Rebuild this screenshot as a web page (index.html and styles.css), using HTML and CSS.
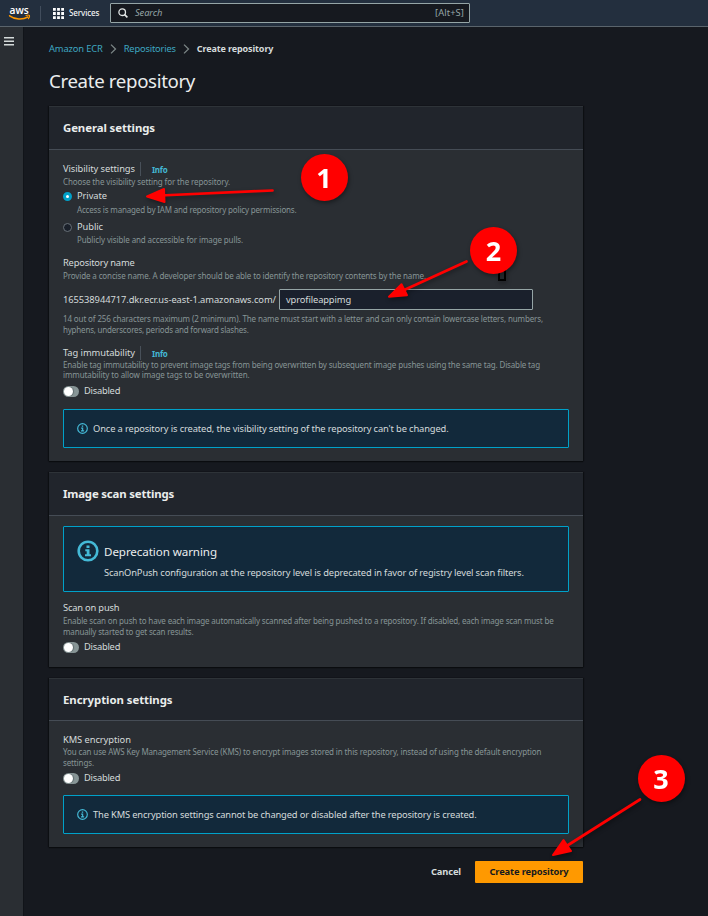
FILE: index.html
```html
<!DOCTYPE html>
<html lang="en">
<head>
<meta charset="utf-8">
<title>Create repository</title>
<link rel="stylesheet" href="styles.css">
</head>
<body>
<header class="topbar">
  <svg class="logo" width="22" height="20" viewBox="0 0 22 20">
    <text x="0.5" y="10.600" class="logo-text" textLength="19.300" lengthAdjust="spacingAndGlyphs">aws</text>
    <path d="M.6 12.800c5.600 4 13 4.200 18.300 1.200" fill="none" stroke="#f90" stroke-width="1.500" stroke-linecap="round"/>
    <path d="M17 12.500c1.500-.5 3-.5 3.500 0 .4.700-.2 2.100-1.100 3.200" fill="none" stroke="#f90" stroke-width="1.100" stroke-linecap="round"/>
  </svg>
  <span class="divider"></span>
  <svg class="grid-icon" width="11" height="11" viewBox="0 0 11 11" fill="#fff">
    <path d="M0 0h2.800v2.800H0zM4.100 0h2.800v2.800H4.100zM8.200 0H11v2.800H8.200zM0 4.100h2.800v2.800H0zM4.100 4.100h2.800v2.800H4.100zM8.200 4.100H11v2.800H8.200zM0 8.200h2.800V11H0zM4.100 8.200h2.800V11H4.100zM8.200 8.200H11V11H8.200z"/>
  </svg>
  <span class="services">Services</span>
  <div class="search">
    <svg width="10" height="10" viewBox="0 0 10 10" fill="none" stroke="#e4e8e8" stroke-width="1.300"><circle cx="4.200" cy="4.200" r="3.300"/><path d="M6.600 6.600l2.800 2.800" stroke-width="1.600"/></svg>
    <span class="placeholder">Search</span>
    <span class="shortcut">[Alt+S]</span>
  </div>
</header>
<div class="shell">
  <nav class="rail">
    <svg width="10" height="9" viewBox="0 0 10 9" fill="#d5dbdb"><path d="M0 0h10v1.500H0zM0 3.500h10V5H0zM0 7h10v1.500H0z"/></svg>
  </nav>
  <main class="content">
    <div class="crumbs">
      <a>Amazon ECR</a>
      <svg width="7" height="10" viewBox="0 0 7 10" fill="none" stroke="#7b8585" stroke-width="1.300"><path d="M1 .6L5.500 5 1 9.400"/></svg>
      <a class="crumb-repos">Repositories</a>
      <svg width="7" height="10" viewBox="0 0 7 10" fill="none" stroke="#7b8585" stroke-width="1.300"><path d="M1 .6L5.500 5 1 9.400"/></svg>
      <b>Create repository</b>
    </div>
    <h1>Create repository</h1>

    <section class="card general">
      <h2>General settings</h2>
      <div class="body">
        <div class="label"><span>Visibility settings</span><span class="info">Info</span></div>
        <p class="hint visibility-hint">Choose the visibility setting for the repository.</p>
        <div class="option"><i class="radio checked"></i>Private</div>
        <p class="hint option-hint">Access is managed by IAM and repository policy permissions.</p>
        <div class="option second"><i class="radio"></i>Public</div>
        <p class="hint option-hint public-hint">Publicly visible and accessible for image pulls.</p>
        <div class="label name-label"><span class="tight">Repository name</span></div>
        <p class="hint name-hint">Provide a concise name. A developer should be able to identify the repository contents by the name.</p>
        <div class="name-row"><span class="prefix">165538944717.dkr.ecr.us-east-1.amazonaws.com/</span><div class="field">vprofileappimg</div></div>
        <p class="hint rules">14 out of 256 characters maximum (2 minimum). The name must start with a letter and can only contain lowercase letters, numbers,<br><span class="rules-end">hyphens, underscores, periods and forward slashes.</span></p>
        <div class="label tag-label"><span>Tag immutability</span><span class="info">Info</span></div>
        <p class="hint tag-hint">Enable tag immutability to prevent image tags from being overwritten by subsequent image pushes using the same tag. Disable tag<br><span class="tag-end">immutability to allow image tags to be overwritten.</span></p>
        <div class="toggle"><i></i>Disabled</div>
        <div class="alert">
          <svg width="11" height="11" viewBox="0 0 16 16" fill="none" stroke="#44b9d6" stroke-width="1.700"><circle cx="8" cy="8" r="7"/><path d="M6 7.500h2.200V11M5.800 11.500h4.600M7 4.500h2"/></svg>
          <span>Once a repository is created, the visibility setting of the repository can't be changed.</span>
        </div>
      </div>
    </section>

    <section class="card scan">
      <h2>Image scan settings</h2>
      <div class="body">
        <div class="alert warning">
          <svg width="22" height="22" viewBox="0 0 22 22"><circle cx="11" cy="11" r="9.300" fill="none" stroke="#44b9d6" stroke-width="2.600"/><path d="M9.500 5.500h3v2.500h-3zM8.300 9.300h4.200v5h1.500v2H8v-2h1.700v-3H8.300z" fill="#44b9d6"/></svg>
          <div>
            <h3>Deprecation warning</h3>
            <p>ScanOnPush configuration at the repository level is deprecated in favor of registry level scan filters.</p>
          </div>
        </div>
        <div class="label scan-label"><span class="tight">Scan on push</span></div>
        <p class="hint scan-hint">Enable scan on push to have each image automatically scanned after being pushed to a repository. If disabled, each image scan must be<br>manually started to get scan results.</p>
        <div class="toggle near"><i></i>Disabled</div>
      </div>
    </section>

    <section class="card encryption">
      <h2>Encryption settings</h2>
      <div class="body">
        <div class="label"><span>KMS encryption</span></div>
        <p class="hint kms-hint">You can use AWS Key Management Service (KMS) to encrypt images stored in this repository, instead of using the default encryption<br>settings.</p>
        <div class="toggle near"><i></i>Disabled</div>
        <div class="alert kms-alert">
          <svg width="11" height="11" viewBox="0 0 16 16" fill="none" stroke="#44b9d6" stroke-width="1.700"><circle cx="8" cy="8" r="7"/><path d="M6 7.500h2.200V11M5.800 11.500h4.600M7 4.500h2"/></svg>
          <span>The KMS encryption settings cannot be changed or disabled after the repository is created.</span>
        </div>
      </div>
    </section>

    <div class="actions"><span class="cancel">Cancel</span><span class="primary">Create repository</span></div>
  </main>
</div>

<svg class="annotations" width="708" height="916" viewBox="0 0 708 916">
  <rect x="499" y="270" width="6" height="10" fill="none" stroke="#000" stroke-width="2"/>
  <g fill="#f00" stroke="#f00" stroke-linecap="round" stroke-linejoin="round">
    <path d="M272.500 190.500L160 195.500" stroke-width="2.700"/>
    <path d="M147 196.500l17-7.500 .5 13z" stroke-width="2"/>
    <path d="M466.500 261.500L402 291" stroke-width="2.700"/>
    <path d="M389 296.700l12.500-12.500 5.500 11z" stroke-width="2"/>
    <path d="M640 799.500L565 847" stroke-width="2.700"/>
    <path d="M553 855l10.500-15 7.500 11z" stroke-width="2"/>
  </g>
  <g fill="#f00">
    <circle cx="324.500" cy="177.500" r="23.500"/>
    <circle cx="493.500" cy="250.500" r="23.500"/>
    <circle cx="661.500" cy="778.500" r="23.500"/>
  </g>
  <g class="numbers">
    <text x="324" y="187.500">1</text>
    <text x="493.500" y="260.700">2</text>
    <text x="661" y="788.700">3</text>
  </g>
</svg>
</body>
</html>
```
FILE: styles.css
```css
* { box-sizing: border-box; }
body {
  margin: 0;
  position: relative;
  height: 916px;
  overflow: hidden;
  background: #16191f;
  color: #d5dbdb;
  font: 9.33px/14px "Noto Sans", "Open Sans", sans-serif;
  letter-spacing: -.13px;
}
h1, h2, h3, p { margin: 0; font-weight: 400; }
svg { flex: none; display: block; }

.topbar {
  display: flex;
  align-items: center;
  height: 27px;
  padding-left: 9px;
  background: #232f3e;
  border-bottom: 1px solid #5a646c;
}
.logo { overflow: visible; }
.logo-text { font: 600 10.5px "Open Sans", sans-serif; fill: #fff; letter-spacing: 0; }
.divider { width: 1px; height: 15px; margin-left: 9px; background: #414d5c; }
.grid-icon { margin-left: 12px; }
.services { margin-left: 5px; width: 41px; color: #f2f3f3; font-size: 8px; font-weight: 500; letter-spacing: -.1px; }
.search {
  display: flex;
  align-items: center;
  width: 360px;
  height: 20px;
  padding: 0 5px 0 7px;
  background: #16191f;
  border: 1px solid #95a5a6;
  border-radius: 1px;
}
.placeholder { margin-left: 7px; color: #95a5a6; font-style: italic; letter-spacing: -.1px; }
.shortcut { margin-left: auto; color: #95a5a6; letter-spacing: .1px; }

.shell { display: flex; height: 889px; }
.rail { width: 24px; padding: 10px 0 0 4px; background: #2a2e33; border-right: 1px solid #111419; }
.content { width: 559px; padding: 15px 0 0 25px; }

.crumbs { display: flex; align-items: center; height: 14px; }
.crumbs a { color: #3ea7c2; }
.crumbs svg { margin: 0 7px; }
.crumbs .crumb-repos { letter-spacing: -.19px; }
.crumbs b { font-size: 9px; letter-spacing: -.11px; }
h1 { margin-top: 11px; height: 27px; line-height: 27px; font-size: 18.67px; letter-spacing: -.34px; color: #eaeded; }

.card {
  background: #2a2e33;
  border-top: 1px solid #2e3338;
  box-shadow: 0 1px 1px #0a0c0f, 1px 0 1px #0e1014, -1px 0 1px #0e1014;
}
.general { margin-top: 12px; height: 355px; }
.scan { margin-top: 11px; height: 195px; }
.encryption { margin-top: 11px; height: 169px; }
h2 {
  height: 43px;
  padding-left: 14px;
  border-bottom: 1px solid #454c55;
  background: #21252c;
  color: #eaeded;
  font-size: 11.4px;
  font-weight: 700;
  line-height: 42px;
  letter-spacing: -.09px;
}
.scan h2 { letter-spacing: -.17px; }
.encryption h2 { height: 42px; line-height: 41px; letter-spacing: -.05px; }
.body { padding: 12px 14px 0; }
.label { display: flex; height: 14px; letter-spacing: -.07px; }
.tight { letter-spacing: -.19px; }
.info {
  margin-left: 5px;
  padding-left: 11px;
  border-left: 1px solid #485059;
  color: #44b9d6;
  font-size: 8px;
  font-weight: 700;
  line-height: 15px;
  letter-spacing: -.22px;
}
.hint { color: #879596; font-size: 8px; line-height: 11px; white-space: nowrap; }
.visibility-hint { letter-spacing: -.11px; }
.option { display: flex; align-items: center; height: 14px; margin-top: 2px; letter-spacing: -.07px; }
.option.second { margin-top: 5px; }
.radio { width: 9px; height: 9px; margin-right: 5px; background: #1a202a; border: 1px solid #687078; border-radius: 50%; }
.radio.checked { background: #fff; border: 3px solid #00a1c9; }
.option-hint { padding-left: 14px; margin-top: 1px; letter-spacing: -.17px; }
.public-hint { margin-top: 0; letter-spacing: -.11px; }
.name-label { margin-top: 11px; }
.name-hint { letter-spacing: -.123px; }
.name-row { display: flex; align-items: center; height: 21px; margin-top: 8px; }
.prefix { width: 216px; letter-spacing: -.065px; }
.field { width: 254px; height: 21px; padding-left: 6px; line-height: 19px; background: #1a202c; border: 1px solid #95a5a6; border-radius: 1px; letter-spacing: -.117px; }
.rules { margin-top: 3px; letter-spacing: -.126px; }
.rules-end { letter-spacing: -.2px; }
.tag-label { margin-top: 11px; }
.tag-hint { line-height: 10px; letter-spacing: -.143px; }
.tag-end { letter-spacing: -.1px; }
.toggle { display: flex; align-items: center; height: 14px; margin-top: 4px; letter-spacing: -.24px; }
.toggle.near { margin-top: 3px; }
.toggle i { display: flex; width: 16px; height: 11px; margin-right: 5px; padding: 1px; border-radius: 6px; background: #879596; }
.toggle i::before { content: ""; width: 9px; height: 9px; border-radius: 50%; background: #fff; box-shadow: 1px 0 1px #5f6b6d; }

.alert {
  display: flex;
  align-items: center;
  height: 39px;
  margin-top: 11px;
  padding-left: 13px;
  background: #12293b;
  border: 1px solid #00a1c9;
  border-radius: 1px;
}
.alert span { margin-left: 5px; letter-spacing: -.13px; white-space: nowrap; }
.alert.warning { align-items: flex-start; height: 66px; margin-top: -2px; padding-top: 13px; }
.warning div { margin-left: 5px; }
h3 { margin-top: 3px; height: 18px; line-height: 18px; font-size: 11.6px; letter-spacing: -.08px; color: #eaeded; }
.warning p { margin-top: 5px; white-space: nowrap; }
.scan-label { margin-top: 9px; }
.scan-hint { letter-spacing: -.16px; }
.kms-hint { margin-top: -1px; letter-spacing: -.125px; }
.alert.kms-alert { margin-top: 10px; }
.kms-alert span { letter-spacing: -.152px; }

.actions { display: flex; justify-content: flex-end; align-items: center; height: 22px; margin-top: 14px; font-weight: 700; }
.primary { width: 108px; margin-left: 14px; line-height: 22px; text-align: center; background: #f90; color: #16191f; border-radius: 1px; }

.annotations { position: absolute; left: 0; top: 0; filter: drop-shadow(1px 2px 2px rgba(0, 0, 0, .4)); }
.numbers { fill: #fff; font: 700 27px "Noto Sans", sans-serif; letter-spacing: 0; text-anchor: middle; }
```
